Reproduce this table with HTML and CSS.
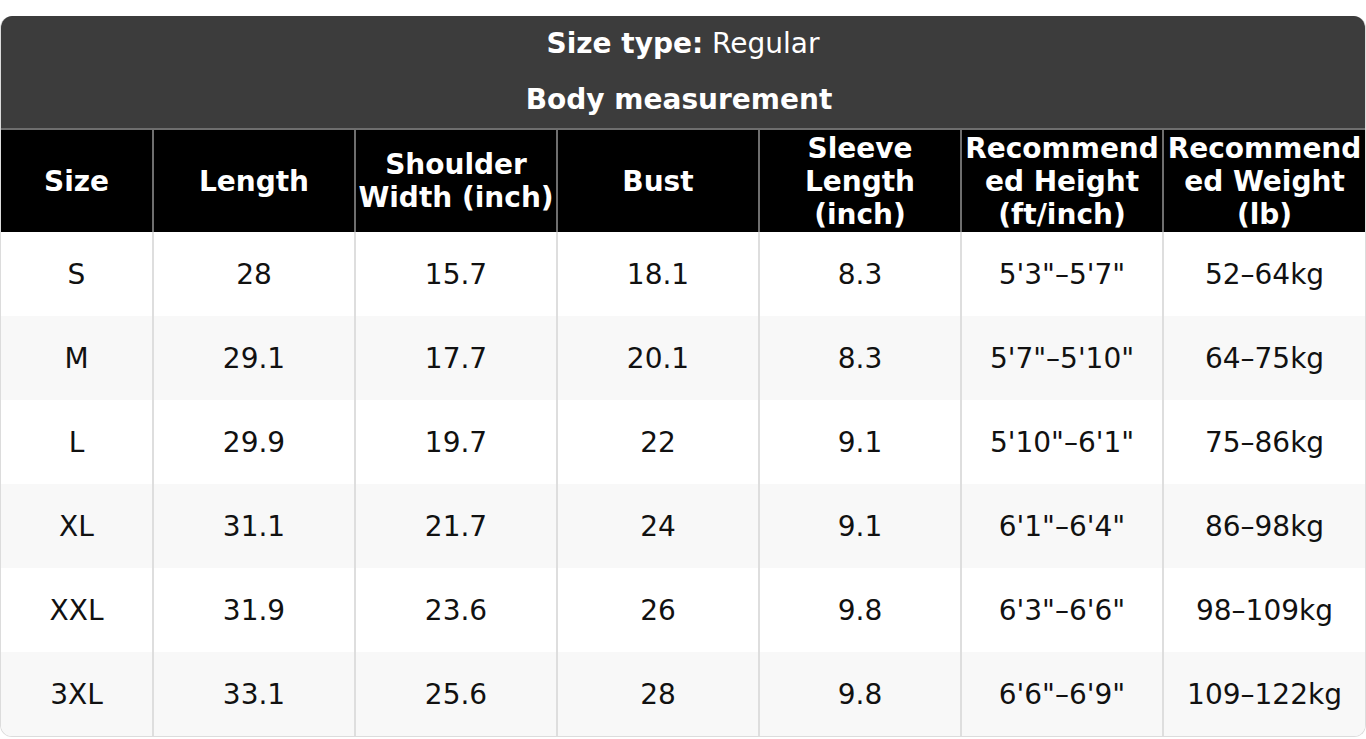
FILE: index.html
```html
<!DOCTYPE html>
<html>
<head>
<meta charset="utf-8">
<link rel="stylesheet" href="styles.css">
</head>
<body>
<div class="card">
  <div class="caption">
    <div class="line"><b>Size type:</b> Regular</div>
    <div class="line line-sub"><b>Body measurement</b></div>
  </div>
  <table class="chart">
    <colgroup>
      <col class="c-first">
      <col class="c-rest"><col class="c-rest"><col class="c-rest"><col class="c-rest"><col class="c-rest"><col class="c-rest">
    </colgroup>
    <thead>
      <tr>
        <th>Size</th>
        <th>Length</th>
        <th>Shoulder Width (inch)</th>
        <th>Bust</th>
        <th>Sleeve Length (inch)</th>
        <th>Recommended Height (ft/inch)</th>
        <th>Recommended Weight (lb)</th>
      </tr>
    </thead>
    <tbody>
      <tr><td>S</td><td>28</td><td>15.7</td><td>18.1</td><td>8.3</td><td>5'3"–5'7"</td><td>52–64kg</td></tr>
      <tr><td>M</td><td>29.1</td><td>17.7</td><td>20.1</td><td>8.3</td><td>5'7"–5'10"</td><td>64–75kg</td></tr>
      <tr><td>L</td><td>29.9</td><td>19.7</td><td>22</td><td>9.1</td><td>5'10"–6'1"</td><td>75–86kg</td></tr>
      <tr><td>XL</td><td>31.1</td><td>21.7</td><td>24</td><td>9.1</td><td>6'1"–6'4"</td><td>86–98kg</td></tr>
      <tr><td>XXL</td><td>31.9</td><td>23.6</td><td>26</td><td>9.8</td><td>6'3"–6'6"</td><td>98–109kg</td></tr>
      <tr><td>3XL</td><td>33.1</td><td>25.6</td><td>28</td><td>9.8</td><td>6'6"–6'9"</td><td>109–122kg</td></tr>
    </tbody>
  </table>
</div>
</body>
</html>
```
FILE: styles.css
```css
html, body {
  margin: 0;
  padding: 0;
  background: #ffffff;
}
body {
  padding-top: 16px;
  font-family: "DejaVu Sans", "Liberation Sans", sans-serif;
  font-size: 28px;
}
.card {
  border: 1px solid #dcdcdc;
  border-top: none;
  border-radius: 12px;
  overflow: hidden;
  background: #ffffff;
}
.caption {
  background: #3c3c3c;
  color: #ffffff;
  text-align: center;
  padding: 11px 0 12px;
  display: flex;
  flex-direction: column;
  gap: 23px;
}
.line {
  line-height: 33px;
}
.line-sub {
  padding-right: 8px;
}
.chart {
  width: 100%;
  table-layout: fixed;
  border-collapse: collapse;
}
.c-first { width: 152px; }
.c-rest { width: 202px; }
.chart th {
  background: #000000;
  color: #ffffff;
  font-weight: bold;
  line-height: 33px;
  height: 103px;
  padding: 0;
  box-sizing: border-box;
  border: 2px solid #6e6e6e;
  border-bottom: none;
  overflow-wrap: anywhere;
  text-align: center;
  vertical-align: middle;
}
.chart th:first-child { border-left: none; }
.chart th:last-child { border-right: none; }
.chart td {
  height: 84px;
  padding: 0;
  text-align: center;
  vertical-align: middle;
  color: #111111;
  border-left: 2px solid #dedede;
  border-right: 2px solid #dedede;
  line-height: 33px;
}
.chart td:first-child { border-left: none; }
.chart td:last-child { border-right: none; }
.chart tbody tr:nth-child(even) td {
  background: #f8f8f8;
}
```
